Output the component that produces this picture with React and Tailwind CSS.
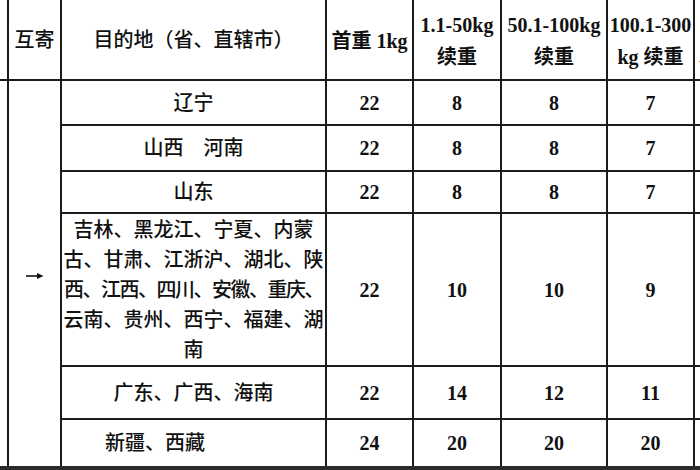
const rows = [
  { dest: "辽宁", h: "h-[45px]", a: 22, b: 8, c: 8, d: 7 },
  { dest: "山西　河南", h: "h-[46px]", a: 22, b: 8, c: 8, d: 7 },
  { dest: "山东", h: "h-[42px]", a: 22, b: 8, c: 8, d: 7 },
  {
    dest: ["吉林、黑龙江、宁夏、内蒙", "古、甘肃、江浙沪、湖北、陕", "西、江西、四川、安徽、重庆、", "云南、贵州、西宁、福建、湖", "南"],
    h: "h-[153px]",
    a: 22, b: 10, c: 10, d: 9,
  },
  { dest: "广东、广西、海南", h: "h-[53px]", a: 22, b: 14, c: 12, d: 11 },
  { dest: "新疆、西藏", h: "h-[49px]", a: 24, b: 20, c: 20, d: 20, left: true },
]

const cell = "border-2 border-[#1c1c1c] p-0 text-center align-middle"
const num = cell + " font-bold"
const last = " border-b-[4px] border-b-[#2a2a2a]"

export default function App() {
  return (
    <div className="w-[700px] h-[470px] overflow-hidden bg-white text-[#111] font-['Liberation_Serif','Noto_Sans_CJK_SC',serif] text-[20px]">
      <table className="table-fixed border-collapse ml-[-40px] w-[821px]">
        <colgroup>
          <col className="w-[47px]" />
          <col className="w-[53px]" />
          <col className="w-[265px]" />
          <col className="w-[87px]" />
          <col className="w-[88px]" />
          <col className="w-[106px]" />
          <col className="w-[87px]" />
          <col className="w-[88px]" />
        </colgroup>
        <thead>
          <tr className="h-[80px] leading-[32px]">
            <th className={cell + " border-t-0 font-normal"}></th>
            <th className={cell + " border-t-0 font-medium"}>互寄</th>
            <th className={cell + " border-t-0 font-medium"}>目的地（省、直辖市）</th>
            <th className={num + " border-t-0 whitespace-nowrap pt-[3px]"}>首重 1kg</th>
            <th className={num + " border-t-0 pt-[3px]"}>1.1-50kg<br />续重</th>
            <th className={num + " border-t-0 whitespace-nowrap pt-[3px]"}>50.1-100kg<br />续重</th>
            <th className={num + " border-t-0 whitespace-nowrap pt-[3px]"}>100.1-300<br />kg 续重</th>
            <th className={num + " border-t-0 whitespace-nowrap pt-[3px]"}>300kg<br />以上续重</th>
          </tr>
        </thead>
        <tbody>
          {rows.map((r, i) => (
            <tr key={i} className={r.h}>
              {i === 0 && (
                <>
                  <td rowSpan={6} className={cell + last}></td>
                  <td rowSpan={6} className={cell + last}>
                    <svg width="18" height="8" viewBox="0 0 18 8" className="inline-block align-middle">
                      <path d="M0 4 H15" stroke="#111" strokeWidth="1.6" />
                      <path d="M11 1 L17.5 4 L11 7 Z" fill="#111" />
                    </svg>
                  </td>
                </>
              )}
              <td className={cell + " font-medium" + (r.left ? " !text-left pl-[43px]" : "") + (i === 5 ? last : "")}>
                {Array.isArray(r.dest) ? (
                  <div className="leading-[30px]">
                    {r.dest.map((l, j) => (
                      <div key={j} className={"whitespace-nowrap" + (j === 2 ? " tracking-[-1.5px]" : "")}>{l}</div>
                    ))}
                  </div>
                ) : (
                  r.dest
                )}
              </td>
              {[r.a, r.b, r.c, r.d].map((v, j) => (
                <td key={j} className={num + (i === 5 ? last : "")}>{v}</td>
              ))}
              <td className={cell + (i === 5 ? last : "")}></td>
            </tr>
          ))}
        </tbody>
      </table>
    </div>
  )
}
